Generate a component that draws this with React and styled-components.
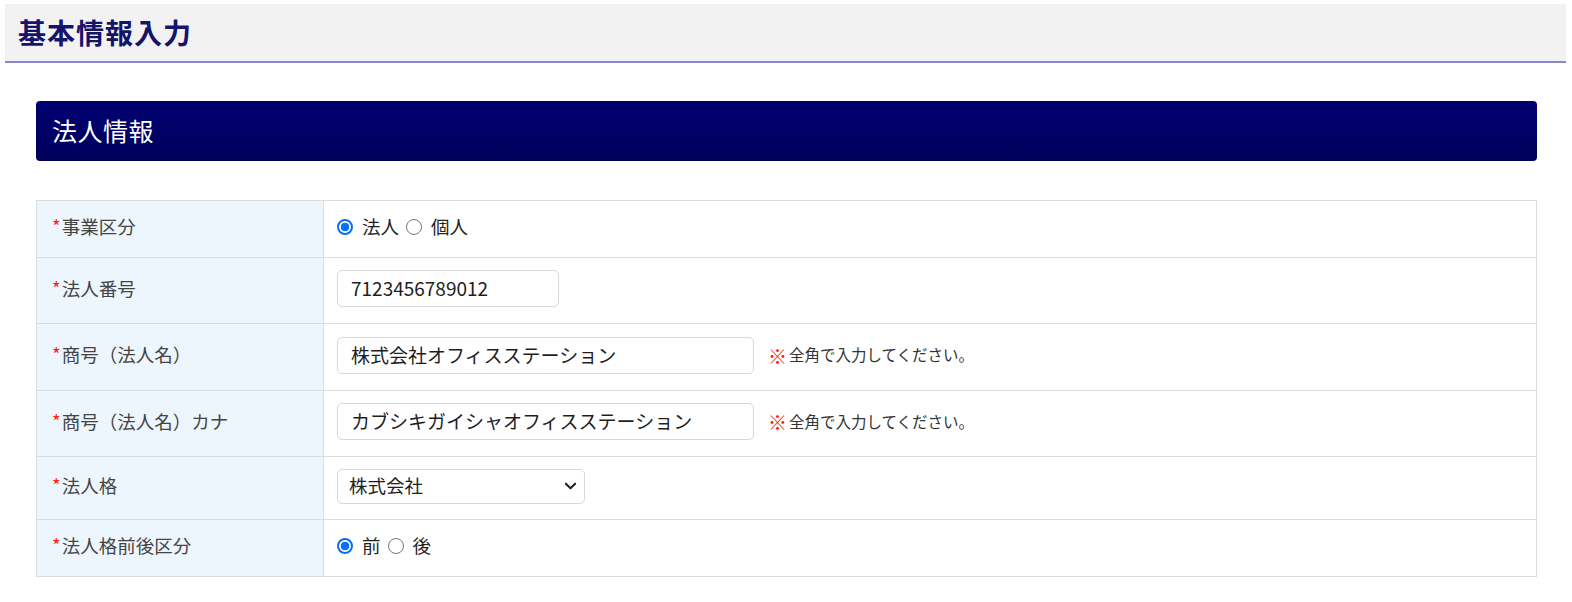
import React from "react";
import styled, { createGlobalStyle } from "styled-components";

const GlobalStyle = createGlobalStyle`
  html, body {
    margin: 0;
    padding: 0;
    background: #ffffff;
  }
  body {
    font-family: "Noto Sans CJK JP", "Noto Sans", sans-serif;
    color: #333;
  }
  * { box-sizing: border-box; }
`;

const Page = styled.div`
  padding: 4px 6px 0 5px;
`;

const PageHeader = styled.header`
  height: 59px;
  background: #f2f2f2;
  border-bottom: 2px solid #8787cf;
  display: flex;
  align-items: center;
  padding: 0 0 2px 13px;
`;

const PageTitle = styled.h1`
  margin: 0;
  font-size: 28px;
  line-height: 1;
  font-weight: 700;
  color: #14146a;
  letter-spacing: 1px;
`;

const Content = styled.main`
  padding: 38px 29px 0 31px;
`;

const SectionHeader = styled.h2`
  margin: 0;
  height: 60px;
  border-radius: 4px;
  background: linear-gradient(to bottom, #000072, #00005a);
  color: #fff;
  font-size: 25px;
  font-weight: 400;
  display: flex;
  align-items: center;
  padding: 0 0 3px 16px;
  letter-spacing: 0.5px;
`;

const FormTable = styled.div`
  margin-top: 39px;
  display: grid;
  grid-template-columns: 287px 1fr;
  border: 1px solid #dcdcdc;
  border-bottom: none;
`;

const LabelCell = styled.div`
  background: #edf5fd;
  border-right: 1px solid #dcdcdc;
  border-bottom: 1px solid #dcdcdc;
  display: flex;
  align-items: center;
  padding: 0 15px 5px;
  min-height: ${(p) => p.$h}px;
  font-size: 18.5px;
  color: #444;
  line-height: 1;
`;

const Required = styled.span`
  color: #ff2020;
  margin-right: 1px;
`;

const ValueCell = styled.div`
  border-bottom: 1px solid #dcdcdc;
  display: flex;
  align-items: center;
  padding: 0 13px ${(p) => p.$pb ?? 4}px;
  min-height: ${(p) => p.$h}px;
  gap: 14px;
`;

const RadioGroup = styled.div`
  display: flex;
  align-items: center;
  font-size: 18.5px;
  color: #222;
  line-height: 1;
`;

const RadioLabel = styled.label`
  display: flex;
  align-items: center;
  margin-right: 7px;
  gap: 9px;
`;

const Radio = styled.input.attrs({ type: "radio" })`
  appearance: none;
  margin: 2px 0 0;
  width: 16px;
  height: 16px;
  border-radius: 50%;
  border: 1.5px solid #767676;
  background: #fff;
  flex: none;

  &:checked {
    border: 2px solid #0b6ef6;
    background: radial-gradient(circle, #0b6ef6 0 4px, #fff 4.6px);
  }
`;

const TextInput = styled.input.attrs({ type: "text" })`
  width: ${(p) => p.$w}px;
  height: 37px;
  border: 1px solid #d8d8d8;
  border-radius: 5px;
  padding: 0 13px 2px;
  font-family: inherit;
  font-size: 19px;
  color: #1e1e1e;
  background: #fff;
  outline: none;
`;

const Select = styled.select`
  width: 248px;
  height: 35px;
  border: 1px solid #d8d8d8;
  border-radius: 5px;
  padding: 0 30px 2px 11px;
  font-family: inherit;
  font-size: 18.5px;
  color: #1e1e1e;
  background-color: #fff;
  appearance: none;
  background-image: url("data:image/svg+xml,%3Csvg xmlns='http://www.w3.org/2000/svg' width='14' height='10' viewBox='0 0 14 10'%3E%3Cpath d='M2 2.5 7 7.5 12 2.5' fill='none' stroke='%23222' stroke-width='2.2' stroke-linecap='round' stroke-linejoin='round'/%3E%3C/svg%3E");
  background-repeat: no-repeat;
  background-position: right 7px center;
  background-size: 13px 10px;
`;

const Note = styled.span`
  font-size: 15.5px;
  color: #333;
  line-height: 1;
  display: flex;
  align-items: center;
`;

const NoteMark = styled.span`
  color: #ff1010;
  font-weight: 700;
  margin-right: 2px;
  font-size: 19px;
`;

function Label({ children, h }) {
  return (
    <LabelCell $h={h}>
      <Required>*</Required>
      {children}
    </LabelCell>
  );
}

function RadioRow({ name, options, h }) {
  return (
    <ValueCell $h={h} $pb={6}>
      <RadioGroup>
        {options.map((o, i) => (
          <RadioLabel key={o}>
            <Radio name={name} defaultChecked={i === 0} />
            {o}
          </RadioLabel>
        ))}
      </RadioGroup>
    </ValueCell>
  );
}

function FullWidthNote() {
  return (
    <Note>
      <NoteMark>※</NoteMark>全角で入力してください。
    </Note>
  );
}

export default function App() {
  return (
    <>
      <GlobalStyle />
      <Page>
        <PageHeader>
          <PageTitle>基本情報入力</PageTitle>
        </PageHeader>
        <Content>
          <SectionHeader>法人情報</SectionHeader>
          <FormTable>
            <Label h={57}>事業区分</Label>
            <RadioRow h={57} name="kind" options={["法人", "個人"]} />

            <Label h={66}>法人番号</Label>
            <ValueCell $h={66}>
              <TextInput $w={222} defaultValue="7123456789012" />
            </ValueCell>

            <Label h={67}>商号（法人名）</Label>
            <ValueCell $h={67}>
              <TextInput $w={417} defaultValue="株式会社オフィスステーション" />
              <FullWidthNote />
            </ValueCell>

            <Label h={66}>商号（法人名）カナ</Label>
            <ValueCell $h={66}>
              <TextInput $w={417} defaultValue="カブシキガイシャオフィスステーション" />
              <FullWidthNote />
            </ValueCell>

            <Label h={63}>法人格</Label>
            <ValueCell $h={63}>
              <Select defaultValue="株式会社">
                <option>株式会社</option>
                <option>有限会社</option>
                <option>合同会社</option>
              </Select>
            </ValueCell>

            <Label h={57}>法人格前後区分</Label>
            <RadioRow h={57} name="position" options={["前", "後"]} />
          </FormTable>
        </Content>
      </Page>
    </>
  );
}
